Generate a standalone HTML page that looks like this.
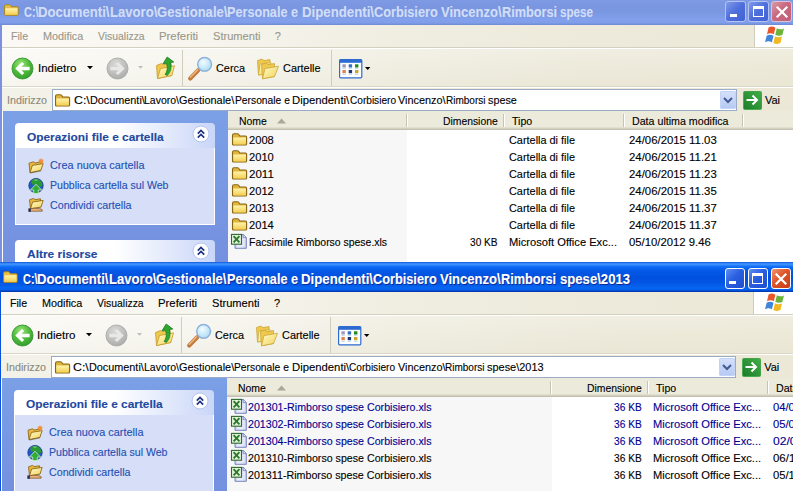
<!DOCTYPE html>
<html><head><meta charset="utf-8"><title>Explorer</title>
<style>
*{box-sizing:border-box;margin:0;padding:0}
html,body{width:793px;height:491px;overflow:hidden;background:#fff}
body{font-family:"Liberation Sans", sans-serif;font-size:11px;color:#000;position:relative}
.t{position:absolute;white-space:pre;transform-origin:0 0;-webkit-text-stroke:0.12px currentColor}
svg{position:absolute;overflow:visible}
</style></head><body>
<svg width="0" height="0" style="left:0;top:0"><defs>
<radialGradient id="gG" cx="0.42" cy="0.3" r="0.8"><stop offset="0" stop-color="#9be67a"/><stop offset="0.5" stop-color="#50bb3a"/><stop offset="1" stop-color="#2c962c"/></radialGradient>
<radialGradient id="gGray" cx="0.42" cy="0.3" r="0.8"><stop offset="0" stop-color="#dadad8"/><stop offset="0.6" stop-color="#bcbcba"/><stop offset="1" stop-color="#a6a6a4"/></radialGradient>
<linearGradient id="gF" x1="0" y1="0" x2="0" y2="1"><stop offset="0" stop-color="#fff3a8"/><stop offset="1" stop-color="#f3cf55"/></linearGradient>
<linearGradient id="gF2" x1="0" y1="0" x2="1" y2="1"><stop offset="0" stop-color="#fffac8"/><stop offset="1" stop-color="#f2d25c"/></linearGradient>
<radialGradient id="gL" cx="0.4" cy="0.35" r="0.7"><stop offset="0" stop-color="#f2fbff"/><stop offset="1" stop-color="#a9dcf3"/></radialGradient>
<linearGradient id="gGo" x1="0" y1="0" x2="0" y2="1"><stop offset="0" stop-color="#4fbf4f"/><stop offset="1" stop-color="#1f8a2a"/></linearGradient>
<linearGradient id="gDD" x1="0" y1="0" x2="0" y2="1"><stop offset="0" stop-color="#d6e2fb"/><stop offset="1" stop-color="#b4c8f2"/></linearGradient>
</defs></svg>
<div style="position:absolute;left:0px;top:-6px;width:793px;height:268px;background:#7b90e0"></div>
<div style="position:absolute;left:0px;top:-6px;width:793px;height:30.5px;background:linear-gradient(#7b96e0 0%,#8aa4ea 6%,#7f9be4 16%,#7a96e0 40%,#7a97e2 60%,#82a0ec 84%,#7f9de8 93%,#6f88d4 100%)"></div>
<svg style="left:4px;top:4.399999999999999px" width="15" height="12" viewBox="0 0 15 12"><path d="M0.5 2.3 Q0.5 0.7 2 0.7 L5.2 0.7 Q6.2 0.7 6.8 1.8 L7.3 2.7 L13 2.7 Q14.2 2.7 14.2 3.9 L14.2 10.4 Q14.2 11.4 13.2 11.4 L1.6 11.4 Q0.5 11.4 0.5 10.4 Z" fill="#e7bd45" stroke="#a8831f" stroke-width="0.9"/><path d="M1.3 4.3 L13.5 4.3 L13.5 10.2 Q13.5 10.8 12.9 10.8 L1.9 10.8 Q1.3 10.8 1.3 10.2 Z" fill="url(#gF)"/></svg>
<div style="position:absolute;left:725.3px;top:1.2px;width:20.6px;height:20.6px;background:linear-gradient(135deg,#8099ea 0%,#4d6edb 50%,#4263d5 100%);border:1px solid #b5c3f0;border-radius:3px"></div>
<div style="position:absolute;left:748.3px;top:1.2px;width:20.6px;height:20.6px;background:linear-gradient(135deg,#8099ea 0%,#4d6edb 50%,#4263d5 100%);border:1px solid #b5c3f0;border-radius:3px"></div>
<div style="position:absolute;left:771.3px;top:1.2px;width:20.6px;height:20.6px;background:linear-gradient(135deg,#d99aa8 0%,#c9687f 45%,#c06078 100%);border:1px solid #dcc3d3;border-radius:3px"></div>
<div style="position:absolute;left:730px;top:13.5px;width:7px;height:3px;background:#fff"></div>
<div style="position:absolute;left:753px;top:6.0px;width:11px;height:10.5px;border:1.5px solid #fff;border-top-width:3px"></div>
<svg style="left:772px;top:1.5px" width="20" height="20" viewBox="0 0 20 20"><path d="M5.5 5.5 L14.5 14.5 M14.5 5.5 L5.5 14.5" stroke="#fff" stroke-width="2.2" stroke-linecap="square"/></svg>
<div style="position:absolute;left:2px;top:24.5px;width:792px;height:238px;background:#efecdd"></div>
<div style="position:absolute;left:2px;top:24.5px;width:792px;height:22.5px;background:linear-gradient(90deg,#faf9f5 0%,#f6f5ee 25%,#f0eee1 50%,#edeadb 75%,#ece9d8 100%)"></div>
<div style="position:absolute;left:754px;top:24.5px;width:40px;height:22.5px;background:#fff;border-left:1px solid #cfccbc"></div>
<svg style="left:765.3px;top:26.4px" width="19" height="17.8" viewBox="0 0.9 17 15.7" preserveAspectRatio="none"><path d="M3.2 2.2 Q6 0.6 9.3 2.4 L7.9 8.2 Q5 6.6 1.8 8.2 Z" fill="#e9572a"/><path d="M10.6 2.9 Q13.6 4.6 17 3 L15.5 8.9 Q12.2 10.4 9.2 8.7 Z" fill="#6cb33a"/><path d="M1.5 9.4 Q4.6 7.8 7.6 9.5 L6.2 15.2 Q3.2 13.6 0 15.2 Z" fill="#3f86d9"/><path d="M8.9 10 Q12 11.7 15.2 10.2 L13.8 16 Q10.6 17.5 7.5 15.8 Z" fill="#f0b822"/></svg>
<div style="position:absolute;left:2px;top:47px;width:792px;height:1px;background:#d4d0c0"></div>
<div style="position:absolute;left:2px;top:48px;width:792px;height:39px;background:linear-gradient(90deg,#faf9f5 0%,#f6f5ee 25%,#f0eee1 50%,#edeadb 75%,#ece9d8 100%)"></div>
<div style="position:absolute;left:2px;top:48px;width:792px;height:39px;background:linear-gradient(rgba(255,255,255,0.2),rgba(255,255,255,0) 50%,rgba(200,195,170,0.08))"></div>
<div style="position:absolute;left:2px;top:48px;width:792px;height:1px;background:#fff"></div>
<div style="position:absolute;left:2px;top:86px;width:792px;height:1px;background:#dad7c6"></div>
<div style="position:absolute;left:2px;top:87px;width:792px;height:1px;background:#fff"></div>
<svg style="left:11.3px;top:56.5px" width="23" height="23" viewBox="0 0 23 23"><circle cx="11.5" cy="11.5" r="10.5" fill="url(#gG)" stroke="#2f952f" stroke-width="0.9"/><path d="M4.3 11.5 L11 4.9 L13.2 7 L10.4 9.8 L18.6 9.8 L18.6 13.2 L10.4 13.2 L13.2 16 L11 18.1 Z" fill="#fff"/></svg>
<svg style="left:87px;top:66px" width="6" height="3.5" viewBox="0 0 6 3.5"><path d="M0 0 L6 0 L3 3.3 Z" fill="#000"/></svg>
<svg style="left:105.7px;top:56.5px" width="23" height="23" viewBox="0 0 23 23"><circle cx="11.5" cy="11.5" r="10.5" fill="url(#gGray)" stroke="#a8a8a6" stroke-width="0.9"/><path d="M18.7 11.5 L12 4.9 L9.8 7 L12.6 9.8 L4.4 9.8 L4.4 13.2 L12.6 13.2 L9.8 16 L12 18.1 Z" fill="#e8e8e4"/></svg>
<svg style="left:137.8px;top:66px" width="5" height="3" viewBox="0 0 5 3"><path d="M0 0 L5 0 L2.5 2.8 Z" fill="#c0beb2"/></svg>
<svg style="left:155px;top:56px" width="21" height="24" viewBox="0 0 21 24"><path d="M1.5 9.5 L6.5 7.5 L8.5 8.8 L16 6.8 L16.8 19.5 L2.5 22.5 Z" fill="#f0c84e" stroke="#c49a2a" stroke-width="0.8"/><path d="M2.5 22.5 L5.5 12.5 L19.5 9.8 L16.8 19.5 Z" fill="url(#gF2)" stroke="#c49a2a" stroke-width="0.8"/><path d="M10.2 18.5 Q13.5 14 11.6 7.2 L8 7.8 L12.2 1 L18.8 6 L15.4 6.6 Q17.6 14 12.4 19.4 Z" fill="#2ea72e" stroke="#1a7a1e" stroke-width="0.8"/></svg>
<div style="position:absolute;left:182px;top:50px;width:1px;height:36px;background:#d0cdbd"></div>
<svg style="left:187px;top:56px" width="27" height="25" viewBox="0 0 27 25"><path d="M11.2 14.3 L3.2 22.4" stroke="#c27a3c" stroke-width="4.2" stroke-linecap="round"/><path d="M10.6 13.9 L3.4 21.2" stroke="#eeb27a" stroke-width="1.6" stroke-linecap="round"/><circle cx="17.6" cy="8.3" r="6.9" fill="url(#gL)" stroke="#8fb2dc" stroke-width="1.5"/></svg>
<svg style="left:256px;top:58px" width="24" height="22" viewBox="0 0 24 22"><path d="M1.5 2.5 L6 1 L8 2.6 L14 1.6 L14.5 15 L2.5 17 Z" fill="#f0c84e" stroke="#c9a63a" stroke-width="0.8"/><path d="M2.5 17 L4 6 L15 4.6 L14.5 15 Z" fill="url(#gF2)" stroke="#c9a63a" stroke-width="0.7"/><path d="M5.5 6.5 L10 5 L12 6.6 L18.5 5.6 L18.5 18.5 L6.5 20.8 Z" fill="#f0c84e" stroke="#c9a63a" stroke-width="0.8"/><path d="M6.5 20.8 L9 10.5 L22.5 8.3 L18.5 18.5 Z" fill="url(#gF2)" stroke="#c9a63a" stroke-width="0.8"/></svg>
<div style="position:absolute;left:331px;top:50px;width:1px;height:36px;background:#d0cdbd"></div>
<svg style="left:339px;top:58.5px" width="24" height="20" viewBox="0 0 24 20"><rect x="0.6" y="0.6" width="22.2" height="18.2" rx="1" fill="#fff" stroke="#2d6bd0" stroke-width="1.2"/><rect x="0.6" y="0.6" width="22.2" height="3.2" fill="#2d6bd0"/><rect x="3.4" y="5.3" width="3.4" height="3.2" fill="#a594bb"/><rect x="9.7" y="5.3" width="3.4" height="3.2" fill="#2f6fc6"/><rect x="16" y="5.3" width="3.4" height="3.2" fill="#218a21"/><rect x="3.4" y="11" width="3.4" height="3.2" fill="#e0824e"/><rect x="9.7" y="11" width="3.4" height="3.2" fill="#1f3870"/><rect x="16" y="11" width="3.4" height="3.2" fill="#c9a62e"/><path d="M3.4 9.6h3.4M9.7 9.6h3.4M16 9.6h3.4M3.4 15.4h3.4M9.7 15.4h3.4M16 15.4h3.4" stroke="#b9d2f2" stroke-width="0.9"/></svg>
<svg style="left:364.8px;top:67px" width="6" height="3.5" viewBox="0 0 6 3.5"><path d="M0 0 L5.4 0 L2.7 3 Z" fill="#000"/></svg>
<div style="position:absolute;left:2px;top:88px;width:792px;height:23px;background:linear-gradient(90deg,#f3f2e9 0%,#f1efe4 25%,#eeebdd 50%,#ece9d9 75%,#ebe8d7 100%)"></div>
<div style="position:absolute;left:52px;top:89px;width:685px;height:22px;background:#fff;border:1px solid #9aabc6"></div>
<svg style="left:55.3px;top:93.5px" width="16" height="13" viewBox="0 0 16 13"><path d="M0.5 2.5 Q0.5 0.8 2 0.8 L5.5 0.8 Q6.6 0.8 7.2 2 L7.8 3 L13.5 3 Q14.6 3 14.6 4.2 L14.6 11 Q14.6 12 13.5 12 L1.6 12 Q0.5 12 0.5 11 Z" fill="#e2b43c" stroke="#866716" stroke-width="1.1"/><path d="M1.3 4.6 L13.9 4.6 L13.9 10.8 Q13.9 11.4 13.2 11.4 L2 11.4 Q1.3 11.4 1.3 10.8 Z" fill="url(#gF)"/></svg>
<div style="position:absolute;left:720px;top:91px;width:16px;height:18px;background:linear-gradient(#d4e0fb,#b6caf3);border:1px solid #c3d3f7;border-radius:1px"></div>
<svg style="left:723px;top:96.5px" width="10" height="8" viewBox="0 0 10 8"><path d="M1 1 L5 5 L9 1" fill="none" stroke="#44598f" stroke-width="2"/></svg>
<div style="position:absolute;left:742.5px;top:90.5px;width:19px;height:19px;background:linear-gradient(45deg,#1c7c2a,#3fae46);border:1px solid rgba(90,175,95,0.6);border-radius:2px"></div>
<svg style="left:743px;top:91px" width="18" height="18" viewBox="0 0 18 18"><path d="M3.5 9 L13.5 9 M9.5 4.5 L14 9 L9.5 13.5" fill="none" stroke="#fff" stroke-width="2"/></svg>
<div style="position:absolute;left:2px;top:111px;width:1px;height:151px;background:#fff"></div>
<div style="position:absolute;left:3px;top:111px;width:225px;height:151px;background:linear-gradient(#7ba0e6,#7490e0 100%)"></div>
<div style="position:absolute;left:15px;top:123px;width:200px;height:25px;background:linear-gradient(90deg,#fff 0%,#fff 50%,#c9d6f8 100%);border-radius:4px 4px 0 0"></div>
<svg style="left:192px;top:124.80000000000001px" width="18" height="18" viewBox="0 0 18 18"><circle cx="9" cy="9" r="8" fill="#fff" stroke="#b4c4ee" stroke-width="1"/><path d="M5.8 8.6 L9 5.4 L12.2 8.6 M5.8 12.6 L9 9.4 L12.2 12.6" fill="none" stroke="#1c3280" stroke-width="1.7"/></svg>
<div style="position:absolute;left:15px;top:148px;width:200px;height:77px;background:#d6dff7;border:1px solid #fff;border-top:none"></div>
<svg style="left:28px;top:158px" width="16" height="16" viewBox="0 0 16 16"><path d="M1 5.2 L5.5 3.8 L7 5 L12.5 4 L12.8 12.2 L2 14.6 Z" fill="#e8b840" stroke="#8f6a1c" stroke-width="0.9"/><path d="M2 14.6 L4.4 7.4 L15.2 5.6 L12.8 12.4 Z" fill="url(#gF2)" stroke="#8f6a1c" stroke-width="0.9"/><path d="M2.2 15.2 L13 12.9" stroke="#6b5a3a" stroke-width="0.9" opacity="0.6"/><circle cx="13" cy="3.2" r="2" fill="#f07a22"/><path d="M13 0.4v5.6M10.2 3.2h5.6M11 1.2l4 4M15 1.2l-4 4" stroke="#f59a3a" stroke-width="0.7"/></svg>
<svg style="left:28px;top:178px" width="16" height="16" viewBox="0 0 16 16"><circle cx="8" cy="7.6" r="7.2" fill="#2458c4" stroke="#1a3a86" stroke-width="0.8"/><path d="M4.5 1.6 Q8 0.2 11.5 1.8 Q14.4 4 14.6 7 Q13 9.5 11 8.5 Q9.5 6 7 6.5 Q4.5 7.5 3.5 5.5 Q3 3 4.5 1.6Z" fill="#2a9a36"/><path d="M6 1.6 Q8 0.8 10 1.8 Q9 3.4 7 3 Z" fill="#7fd07a" opacity="0.8"/><path d="M8 6.2 L13.6 12 L10.3 12 L10.3 15.6 L5.7 15.6 L5.7 12 L2.4 12 Z" fill="#2fae35" stroke="#d5f0cf" stroke-width="0.8"/></svg>
<svg style="left:28px;top:197px" width="16" height="16" viewBox="0 0 16 16"><path d="M1.5 2.8 L5.5 1.4 L7 2.6 L12.5 1.8 L13 9.8 L2.5 11.8 Z" fill="#e8b840" stroke="#8f6a1c" stroke-width="0.9"/><path d="M2.5 11.8 L4.6 5 L15.2 3.4 L13 10 Z" fill="url(#gF2)" stroke="#8f6a1c" stroke-width="0.9"/><path d="M1.2 13.6 Q3 10.8 6 11.2 L10.5 11.6 Q13.6 11.8 14.2 12.8 L14.2 14.2 L1.2 14.2 Z" fill="#e8b27a" stroke="#7a4e22" stroke-width="0.7"/><rect x="0.4" y="11.4" width="2.4" height="3.4" fill="#222c55"/></svg>
<div style="position:absolute;left:15px;top:240px;width:200px;height:22px;background:linear-gradient(90deg,#fff 0%,#fff 50%,#c9d6f8 100%);border-radius:4px 4px 0 0"></div>
<svg style="left:192px;top:241.8px" width="18" height="18" viewBox="0 0 18 18"><circle cx="9" cy="9" r="8" fill="#fff" stroke="#b4c4ee" stroke-width="1"/><path d="M5.8 8.6 L9 5.4 L12.2 8.6 M5.8 12.6 L9 9.4 L12.2 12.6" fill="none" stroke="#1c3280" stroke-width="1.7"/></svg>
<div style="position:absolute;left:228px;top:111px;width:566px;height:151px;background:#fff"></div>
<div style="position:absolute;left:228px;top:111px;width:179px;height:151px;background:#f7f7f7"></div>
<div style="position:absolute;left:228px;top:111px;width:566px;height:19px;background:#ebeadb;border-bottom:1px solid #d6d2c2"></div>
<div style="position:absolute;left:228px;top:127px;width:566px;height:1px;background:#e2dfcf"></div>
<div style="position:absolute;left:228px;top:128px;width:566px;height:1px;background:#d4d0c0"></div>
<div style="position:absolute;left:228px;top:129px;width:566px;height:1px;background:#c4c0af"></div>
<div style="position:absolute;left:406px;top:114px;width:1px;height:13px;background:#c7c5b2"></div>
<div style="position:absolute;left:407px;top:114px;width:1px;height:13px;background:#fff"></div>
<div style="position:absolute;left:503px;top:114px;width:1px;height:13px;background:#c7c5b2"></div>
<div style="position:absolute;left:504px;top:114px;width:1px;height:13px;background:#fff"></div>
<div style="position:absolute;left:623px;top:114px;width:1px;height:13px;background:#c7c5b2"></div>
<div style="position:absolute;left:624px;top:114px;width:1px;height:13px;background:#fff"></div>
<div style="position:absolute;left:742px;top:114px;width:1px;height:13px;background:#c7c5b2"></div>
<div style="position:absolute;left:743px;top:114px;width:1px;height:13px;background:#fff"></div>
<svg style="left:276.5px;top:118.3px" width="9" height="6"><path d="M0 5.5 L4.5 0.5 L9 5.5 Z" fill="#aca899"/></svg>
<svg style="left:232.2px;top:132.9px" width="16" height="13" viewBox="0 0 16 13"><path d="M0.5 2.5 Q0.5 0.8 2 0.8 L5.5 0.8 Q6.6 0.8 7.2 2 L7.8 3 L13.5 3 Q14.6 3 14.6 4.2 L14.6 11 Q14.6 12 13.5 12 L1.6 12 Q0.5 12 0.5 11 Z" fill="#e2b43c" stroke="#866716" stroke-width="1.1"/><path d="M1.3 4.6 L13.9 4.6 L13.9 10.8 Q13.9 11.4 13.2 11.4 L2 11.4 Q1.3 11.4 1.3 10.8 Z" fill="url(#gF)"/></svg>
<svg style="left:232.2px;top:149.9px" width="16" height="13" viewBox="0 0 16 13"><path d="M0.5 2.5 Q0.5 0.8 2 0.8 L5.5 0.8 Q6.6 0.8 7.2 2 L7.8 3 L13.5 3 Q14.6 3 14.6 4.2 L14.6 11 Q14.6 12 13.5 12 L1.6 12 Q0.5 12 0.5 11 Z" fill="#e2b43c" stroke="#866716" stroke-width="1.1"/><path d="M1.3 4.6 L13.9 4.6 L13.9 10.8 Q13.9 11.4 13.2 11.4 L2 11.4 Q1.3 11.4 1.3 10.8 Z" fill="url(#gF)"/></svg>
<svg style="left:232.2px;top:166.9px" width="16" height="13" viewBox="0 0 16 13"><path d="M0.5 2.5 Q0.5 0.8 2 0.8 L5.5 0.8 Q6.6 0.8 7.2 2 L7.8 3 L13.5 3 Q14.6 3 14.6 4.2 L14.6 11 Q14.6 12 13.5 12 L1.6 12 Q0.5 12 0.5 11 Z" fill="#e2b43c" stroke="#866716" stroke-width="1.1"/><path d="M1.3 4.6 L13.9 4.6 L13.9 10.8 Q13.9 11.4 13.2 11.4 L2 11.4 Q1.3 11.4 1.3 10.8 Z" fill="url(#gF)"/></svg>
<svg style="left:232.2px;top:183.9px" width="16" height="13" viewBox="0 0 16 13"><path d="M0.5 2.5 Q0.5 0.8 2 0.8 L5.5 0.8 Q6.6 0.8 7.2 2 L7.8 3 L13.5 3 Q14.6 3 14.6 4.2 L14.6 11 Q14.6 12 13.5 12 L1.6 12 Q0.5 12 0.5 11 Z" fill="#e2b43c" stroke="#866716" stroke-width="1.1"/><path d="M1.3 4.6 L13.9 4.6 L13.9 10.8 Q13.9 11.4 13.2 11.4 L2 11.4 Q1.3 11.4 1.3 10.8 Z" fill="url(#gF)"/></svg>
<svg style="left:232.2px;top:200.9px" width="16" height="13" viewBox="0 0 16 13"><path d="M0.5 2.5 Q0.5 0.8 2 0.8 L5.5 0.8 Q6.6 0.8 7.2 2 L7.8 3 L13.5 3 Q14.6 3 14.6 4.2 L14.6 11 Q14.6 12 13.5 12 L1.6 12 Q0.5 12 0.5 11 Z" fill="#e2b43c" stroke="#866716" stroke-width="1.1"/><path d="M1.3 4.6 L13.9 4.6 L13.9 10.8 Q13.9 11.4 13.2 11.4 L2 11.4 Q1.3 11.4 1.3 10.8 Z" fill="url(#gF)"/></svg>
<svg style="left:232.2px;top:217.9px" width="16" height="13" viewBox="0 0 16 13"><path d="M0.5 2.5 Q0.5 0.8 2 0.8 L5.5 0.8 Q6.6 0.8 7.2 2 L7.8 3 L13.5 3 Q14.6 3 14.6 4.2 L14.6 11 Q14.6 12 13.5 12 L1.6 12 Q0.5 12 0.5 11 Z" fill="#e2b43c" stroke="#866716" stroke-width="1.1"/><path d="M1.3 4.6 L13.9 4.6 L13.9 10.8 Q13.9 11.4 13.2 11.4 L2 11.4 Q1.3 11.4 1.3 10.8 Z" fill="url(#gF)"/></svg>
<svg style="left:231px;top:233px" width="16" height="16" viewBox="0 0 16 16"><path d="M4 1.5 L12.2 1.5 L15.3 4.6 L15.3 15.3 L4 15.3 Z" fill="#d3dbf6" stroke="#6a78b4" stroke-width="0.9"/><path d="M12.2 1.5 L12.2 4.6 L15.3 4.6 Z" fill="#f4f6ff" stroke="#6a78b4" stroke-width="0.7"/><path d="M11 6.2H14M11 8.2H14M11 10.2H14M6 12.2H14M6 13.8H12" stroke="#f2f5ff" stroke-width="0.9"/><rect x="0.5" y="1.4" width="10" height="9.8" fill="#e4f2dc" stroke="#2f6a2a" stroke-width="1.1"/><path d="M2.6 3.2 L8.4 9.4 M8.4 3.2 L2.6 9.4" stroke="#2c7a2c" stroke-width="1.9"/></svg>
<div style="position:absolute;left:-0.8px;top:262px;width:794px;height:230px;background:#0a52dc"></div>
<div style="position:absolute;left:-0.8px;top:262px;width:794px;height:30px;background:linear-gradient(#0a46c8 0%,#2f7ff7 3%,#3d93ff 8%,#0f6bf5 16%,#0458e6 30%,#0050dd 52%,#0356e4 70%,#0766f0 86%,#0560ec 93%,#0241c4 97%,#002fa0 100%)"></div>
<svg style="left:3.2px;top:271.4px" width="15" height="12" viewBox="0 0 15 12"><path d="M0.5 2.3 Q0.5 0.7 2 0.7 L5.2 0.7 Q6.2 0.7 6.8 1.8 L7.3 2.7 L13 2.7 Q14.2 2.7 14.2 3.9 L14.2 10.4 Q14.2 11.4 13.2 11.4 L1.6 11.4 Q0.5 11.4 0.5 10.4 Z" fill="#e7bd45" stroke="#a8831f" stroke-width="0.9"/><path d="M1.3 4.3 L13.5 4.3 L13.5 10.2 Q13.5 10.8 12.9 10.8 L1.9 10.8 Q1.3 10.8 1.3 10.2 Z" fill="url(#gF)"/></svg>
<div style="position:absolute;left:724.5px;top:268.2px;width:20.6px;height:20.6px;background:linear-gradient(135deg,#5f8ff6 0%,#2a5fe0 45%,#1f4fd0 100%);border:1px solid #fff;border-radius:3px"></div>
<div style="position:absolute;left:747.5px;top:268.2px;width:20.6px;height:20.6px;background:linear-gradient(135deg,#5f8ff6 0%,#2a5fe0 45%,#1f4fd0 100%);border:1px solid #fff;border-radius:3px"></div>
<div style="position:absolute;left:770.5px;top:268.2px;width:20.6px;height:20.6px;background:linear-gradient(135deg,#f09672 0%,#df5428 45%,#c63c16 100%);border:1px solid #fff;border-radius:3px"></div>
<div style="position:absolute;left:729.2px;top:280.5px;width:7px;height:3px;background:#fff"></div>
<div style="position:absolute;left:752.2px;top:273.0px;width:11px;height:10.5px;border:1.5px solid #fff;border-top-width:3px"></div>
<svg style="left:771.2px;top:268.5px" width="20" height="20" viewBox="0 0 20 20"><path d="M5.5 5.5 L14.5 14.5 M14.5 5.5 L5.5 14.5" stroke="#fff" stroke-width="2.2" stroke-linecap="square"/></svg>
<div style="position:absolute;left:1.2px;top:292px;width:792px;height:200px;background:#efecdd"></div>
<div style="position:absolute;left:1.2px;top:292px;width:792px;height:22px;background:linear-gradient(90deg,#faf9f5 0%,#f6f5ee 25%,#f0eee1 50%,#edeadb 75%,#ece9d8 100%)"></div>
<div style="position:absolute;left:753.2px;top:292px;width:40px;height:22px;background:#fff;border-left:1px solid #cfccbc"></div>
<svg style="left:764.5px;top:293.4px" width="19" height="17.8" viewBox="0 0.9 17 15.7" preserveAspectRatio="none"><path d="M3.2 2.2 Q6 0.6 9.3 2.4 L7.9 8.2 Q5 6.6 1.8 8.2 Z" fill="#e9572a"/><path d="M10.6 2.9 Q13.6 4.6 17 3 L15.5 8.9 Q12.2 10.4 9.2 8.7 Z" fill="#6cb33a"/><path d="M1.5 9.4 Q4.6 7.8 7.6 9.5 L6.2 15.2 Q3.2 13.6 0 15.2 Z" fill="#3f86d9"/><path d="M8.9 10 Q12 11.7 15.2 10.2 L13.8 16 Q10.6 17.5 7.5 15.8 Z" fill="#f0b822"/></svg>
<div style="position:absolute;left:1.2px;top:314px;width:792px;height:1px;background:#d4d0c0"></div>
<div style="position:absolute;left:1.2px;top:315px;width:792px;height:39px;background:linear-gradient(90deg,#faf9f5 0%,#f6f5ee 25%,#f0eee1 50%,#edeadb 75%,#ece9d8 100%)"></div>
<div style="position:absolute;left:1.2px;top:315px;width:792px;height:39px;background:linear-gradient(rgba(255,255,255,0.2),rgba(255,255,255,0) 50%,rgba(200,195,170,0.08))"></div>
<div style="position:absolute;left:1.2px;top:315px;width:792px;height:1px;background:#fff"></div>
<div style="position:absolute;left:1.2px;top:353px;width:792px;height:1px;background:#dad7c6"></div>
<div style="position:absolute;left:1.2px;top:354px;width:792px;height:1px;background:#fff"></div>
<svg style="left:10.5px;top:323.5px" width="23" height="23" viewBox="0 0 23 23"><circle cx="11.5" cy="11.5" r="10.5" fill="url(#gG)" stroke="#2f952f" stroke-width="0.9"/><path d="M4.3 11.5 L11 4.9 L13.2 7 L10.4 9.8 L18.6 9.8 L18.6 13.2 L10.4 13.2 L13.2 16 L11 18.1 Z" fill="#fff"/></svg>
<svg style="left:86.2px;top:333px" width="6" height="3.5" viewBox="0 0 6 3.5"><path d="M0 0 L6 0 L3 3.3 Z" fill="#000"/></svg>
<svg style="left:104.9px;top:323.5px" width="23" height="23" viewBox="0 0 23 23"><circle cx="11.5" cy="11.5" r="10.5" fill="url(#gGray)" stroke="#a8a8a6" stroke-width="0.9"/><path d="M18.7 11.5 L12 4.9 L9.8 7 L12.6 9.8 L4.4 9.8 L4.4 13.2 L12.6 13.2 L9.8 16 L12 18.1 Z" fill="#e8e8e4"/></svg>
<svg style="left:137.0px;top:333px" width="5" height="3" viewBox="0 0 5 3"><path d="M0 0 L5 0 L2.5 2.8 Z" fill="#c0beb2"/></svg>
<svg style="left:154.2px;top:323px" width="21" height="24" viewBox="0 0 21 24"><path d="M1.5 9.5 L6.5 7.5 L8.5 8.8 L16 6.8 L16.8 19.5 L2.5 22.5 Z" fill="#f0c84e" stroke="#c49a2a" stroke-width="0.8"/><path d="M2.5 22.5 L5.5 12.5 L19.5 9.8 L16.8 19.5 Z" fill="url(#gF2)" stroke="#c49a2a" stroke-width="0.8"/><path d="M10.2 18.5 Q13.5 14 11.6 7.2 L8 7.8 L12.2 1 L18.8 6 L15.4 6.6 Q17.6 14 12.4 19.4 Z" fill="#2ea72e" stroke="#1a7a1e" stroke-width="0.8"/></svg>
<div style="position:absolute;left:181.2px;top:317px;width:1px;height:36px;background:#d0cdbd"></div>
<svg style="left:186.2px;top:323px" width="27" height="25" viewBox="0 0 27 25"><path d="M11.2 14.3 L3.2 22.4" stroke="#c27a3c" stroke-width="4.2" stroke-linecap="round"/><path d="M10.6 13.9 L3.4 21.2" stroke="#eeb27a" stroke-width="1.6" stroke-linecap="round"/><circle cx="17.6" cy="8.3" r="6.9" fill="url(#gL)" stroke="#8fb2dc" stroke-width="1.5"/></svg>
<svg style="left:255.2px;top:325px" width="24" height="22" viewBox="0 0 24 22"><path d="M1.5 2.5 L6 1 L8 2.6 L14 1.6 L14.5 15 L2.5 17 Z" fill="#f0c84e" stroke="#c9a63a" stroke-width="0.8"/><path d="M2.5 17 L4 6 L15 4.6 L14.5 15 Z" fill="url(#gF2)" stroke="#c9a63a" stroke-width="0.7"/><path d="M5.5 6.5 L10 5 L12 6.6 L18.5 5.6 L18.5 18.5 L6.5 20.8 Z" fill="#f0c84e" stroke="#c9a63a" stroke-width="0.8"/><path d="M6.5 20.8 L9 10.5 L22.5 8.3 L18.5 18.5 Z" fill="url(#gF2)" stroke="#c9a63a" stroke-width="0.8"/></svg>
<div style="position:absolute;left:330.2px;top:317px;width:1px;height:36px;background:#d0cdbd"></div>
<svg style="left:338.2px;top:325.5px" width="24" height="20" viewBox="0 0 24 20"><rect x="0.6" y="0.6" width="22.2" height="18.2" rx="1" fill="#fff" stroke="#2d6bd0" stroke-width="1.2"/><rect x="0.6" y="0.6" width="22.2" height="3.2" fill="#2d6bd0"/><rect x="3.4" y="5.3" width="3.4" height="3.2" fill="#a594bb"/><rect x="9.7" y="5.3" width="3.4" height="3.2" fill="#2f6fc6"/><rect x="16" y="5.3" width="3.4" height="3.2" fill="#218a21"/><rect x="3.4" y="11" width="3.4" height="3.2" fill="#e0824e"/><rect x="9.7" y="11" width="3.4" height="3.2" fill="#1f3870"/><rect x="16" y="11" width="3.4" height="3.2" fill="#c9a62e"/><path d="M3.4 9.6h3.4M9.7 9.6h3.4M16 9.6h3.4M3.4 15.4h3.4M9.7 15.4h3.4M16 15.4h3.4" stroke="#b9d2f2" stroke-width="0.9"/></svg>
<svg style="left:364.0px;top:334px" width="6" height="3.5" viewBox="0 0 6 3.5"><path d="M0 0 L5.4 0 L2.7 3 Z" fill="#000"/></svg>
<div style="position:absolute;left:1.2px;top:355px;width:792px;height:23px;background:linear-gradient(90deg,#f3f2e9 0%,#f1efe4 25%,#eeebdd 50%,#ece9d9 75%,#ebe8d7 100%)"></div>
<div style="position:absolute;left:51.2px;top:356px;width:685px;height:22px;background:#fff;border:1px solid #9aabc6"></div>
<svg style="left:54.5px;top:360.5px" width="16" height="13" viewBox="0 0 16 13"><path d="M0.5 2.5 Q0.5 0.8 2 0.8 L5.5 0.8 Q6.6 0.8 7.2 2 L7.8 3 L13.5 3 Q14.6 3 14.6 4.2 L14.6 11 Q14.6 12 13.5 12 L1.6 12 Q0.5 12 0.5 11 Z" fill="#e2b43c" stroke="#866716" stroke-width="1.1"/><path d="M1.3 4.6 L13.9 4.6 L13.9 10.8 Q13.9 11.4 13.2 11.4 L2 11.4 Q1.3 11.4 1.3 10.8 Z" fill="url(#gF)"/></svg>
<div style="position:absolute;left:719.2px;top:358px;width:16px;height:18px;background:linear-gradient(#d4e0fb,#b6caf3);border:1px solid #c3d3f7;border-radius:1px"></div>
<svg style="left:722.2px;top:363.5px" width="10" height="8" viewBox="0 0 10 8"><path d="M1 1 L5 5 L9 1" fill="none" stroke="#44598f" stroke-width="2"/></svg>
<div style="position:absolute;left:741.7px;top:357.5px;width:19px;height:19px;background:linear-gradient(45deg,#1c7c2a,#3fae46);border:1px solid rgba(90,175,95,0.6);border-radius:2px"></div>
<svg style="left:742.2px;top:358px" width="18" height="18" viewBox="0 0 18 18"><path d="M3.5 9 L13.5 9 M9.5 4.5 L14 9 L9.5 13.5" fill="none" stroke="#fff" stroke-width="2"/></svg>
<div style="position:absolute;left:1.2px;top:378px;width:1px;height:113px;background:#fff"></div>
<div style="position:absolute;left:2.2px;top:378px;width:225px;height:113px;background:linear-gradient(#7ba0e6,#7490e0 100%)"></div>
<div style="position:absolute;left:14.2px;top:390px;width:200px;height:25px;background:linear-gradient(90deg,#fff 0%,#fff 50%,#c9d6f8 100%);border-radius:4px 4px 0 0"></div>
<svg style="left:191.2px;top:391.8px" width="18" height="18" viewBox="0 0 18 18"><circle cx="9" cy="9" r="8" fill="#fff" stroke="#b4c4ee" stroke-width="1"/><path d="M5.8 8.6 L9 5.4 L12.2 8.6 M5.8 12.6 L9 9.4 L12.2 12.6" fill="none" stroke="#1c3280" stroke-width="1.7"/></svg>
<div style="position:absolute;left:14.2px;top:415px;width:200px;height:77px;background:#d6dff7;border:1px solid #fff;border-top:none"></div>
<svg style="left:27.2px;top:425px" width="16" height="16" viewBox="0 0 16 16"><path d="M1 5.2 L5.5 3.8 L7 5 L12.5 4 L12.8 12.2 L2 14.6 Z" fill="#e8b840" stroke="#8f6a1c" stroke-width="0.9"/><path d="M2 14.6 L4.4 7.4 L15.2 5.6 L12.8 12.4 Z" fill="url(#gF2)" stroke="#8f6a1c" stroke-width="0.9"/><path d="M2.2 15.2 L13 12.9" stroke="#6b5a3a" stroke-width="0.9" opacity="0.6"/><circle cx="13" cy="3.2" r="2" fill="#f07a22"/><path d="M13 0.4v5.6M10.2 3.2h5.6M11 1.2l4 4M15 1.2l-4 4" stroke="#f59a3a" stroke-width="0.7"/></svg>
<svg style="left:27.2px;top:445px" width="16" height="16" viewBox="0 0 16 16"><circle cx="8" cy="7.6" r="7.2" fill="#2458c4" stroke="#1a3a86" stroke-width="0.8"/><path d="M4.5 1.6 Q8 0.2 11.5 1.8 Q14.4 4 14.6 7 Q13 9.5 11 8.5 Q9.5 6 7 6.5 Q4.5 7.5 3.5 5.5 Q3 3 4.5 1.6Z" fill="#2a9a36"/><path d="M6 1.6 Q8 0.8 10 1.8 Q9 3.4 7 3 Z" fill="#7fd07a" opacity="0.8"/><path d="M8 6.2 L13.6 12 L10.3 12 L10.3 15.6 L5.7 15.6 L5.7 12 L2.4 12 Z" fill="#2fae35" stroke="#d5f0cf" stroke-width="0.8"/></svg>
<svg style="left:27.2px;top:464px" width="16" height="16" viewBox="0 0 16 16"><path d="M1.5 2.8 L5.5 1.4 L7 2.6 L12.5 1.8 L13 9.8 L2.5 11.8 Z" fill="#e8b840" stroke="#8f6a1c" stroke-width="0.9"/><path d="M2.5 11.8 L4.6 5 L15.2 3.4 L13 10 Z" fill="url(#gF2)" stroke="#8f6a1c" stroke-width="0.9"/><path d="M1.2 13.6 Q3 10.8 6 11.2 L10.5 11.6 Q13.6 11.8 14.2 12.8 L14.2 14.2 L1.2 14.2 Z" fill="#e8b27a" stroke="#7a4e22" stroke-width="0.7"/><rect x="0.4" y="11.4" width="2.4" height="3.4" fill="#222c55"/></svg>
<div style="position:absolute;left:227.2px;top:378px;width:566px;height:113px;background:#fff"></div>
<div style="position:absolute;left:227.2px;top:378px;width:324.79999999999995px;height:113px;background:#f7f7f7"></div>
<div style="position:absolute;left:227.2px;top:378px;width:566px;height:19px;background:#ebeadb;border-bottom:1px solid #d6d2c2"></div>
<div style="position:absolute;left:227.2px;top:394px;width:566px;height:1px;background:#e2dfcf"></div>
<div style="position:absolute;left:227.2px;top:395px;width:566px;height:1px;background:#d4d0c0"></div>
<div style="position:absolute;left:227.2px;top:396px;width:566px;height:1px;background:#c4c0af"></div>
<div style="position:absolute;left:550.2px;top:381px;width:1px;height:13px;background:#c7c5b2"></div>
<div style="position:absolute;left:551.2px;top:381px;width:1px;height:13px;background:#fff"></div>
<div style="position:absolute;left:646.8px;top:381px;width:1px;height:13px;background:#c7c5b2"></div>
<div style="position:absolute;left:647.8px;top:381px;width:1px;height:13px;background:#fff"></div>
<div style="position:absolute;left:767.0px;top:381px;width:1px;height:13px;background:#c7c5b2"></div>
<div style="position:absolute;left:768.0px;top:381px;width:1px;height:13px;background:#fff"></div>
<svg style="left:276.5px;top:385.3px" width="9" height="6"><path d="M0 5.5 L4.5 0.5 L9 5.5 Z" fill="#aca899"/></svg>
<svg style="left:231px;top:398px" width="16" height="16" viewBox="0 0 16 16"><path d="M4 1.5 L12.2 1.5 L15.3 4.6 L15.3 15.3 L4 15.3 Z" fill="#d3dbf6" stroke="#6a78b4" stroke-width="0.9"/><path d="M12.2 1.5 L12.2 4.6 L15.3 4.6 Z" fill="#f4f6ff" stroke="#6a78b4" stroke-width="0.7"/><path d="M11 6.2H14M11 8.2H14M11 10.2H14M6 12.2H14M6 13.8H12" stroke="#f2f5ff" stroke-width="0.9"/><rect x="0.5" y="1.4" width="10" height="9.8" fill="#e4f2dc" stroke="#2f6a2a" stroke-width="1.1"/><path d="M2.6 3.2 L8.4 9.4 M8.4 3.2 L2.6 9.4" stroke="#2c7a2c" stroke-width="1.9"/></svg>
<svg style="left:231px;top:415px" width="16" height="16" viewBox="0 0 16 16"><path d="M4 1.5 L12.2 1.5 L15.3 4.6 L15.3 15.3 L4 15.3 Z" fill="#d3dbf6" stroke="#6a78b4" stroke-width="0.9"/><path d="M12.2 1.5 L12.2 4.6 L15.3 4.6 Z" fill="#f4f6ff" stroke="#6a78b4" stroke-width="0.7"/><path d="M11 6.2H14M11 8.2H14M11 10.2H14M6 12.2H14M6 13.8H12" stroke="#f2f5ff" stroke-width="0.9"/><rect x="0.5" y="1.4" width="10" height="9.8" fill="#e4f2dc" stroke="#2f6a2a" stroke-width="1.1"/><path d="M2.6 3.2 L8.4 9.4 M8.4 3.2 L2.6 9.4" stroke="#2c7a2c" stroke-width="1.9"/></svg>
<svg style="left:231px;top:432px" width="16" height="16" viewBox="0 0 16 16"><path d="M4 1.5 L12.2 1.5 L15.3 4.6 L15.3 15.3 L4 15.3 Z" fill="#d3dbf6" stroke="#6a78b4" stroke-width="0.9"/><path d="M12.2 1.5 L12.2 4.6 L15.3 4.6 Z" fill="#f4f6ff" stroke="#6a78b4" stroke-width="0.7"/><path d="M11 6.2H14M11 8.2H14M11 10.2H14M6 12.2H14M6 13.8H12" stroke="#f2f5ff" stroke-width="0.9"/><rect x="0.5" y="1.4" width="10" height="9.8" fill="#e4f2dc" stroke="#2f6a2a" stroke-width="1.1"/><path d="M2.6 3.2 L8.4 9.4 M8.4 3.2 L2.6 9.4" stroke="#2c7a2c" stroke-width="1.9"/></svg>
<svg style="left:231px;top:449px" width="16" height="16" viewBox="0 0 16 16"><path d="M4 1.5 L12.2 1.5 L15.3 4.6 L15.3 15.3 L4 15.3 Z" fill="#d3dbf6" stroke="#6a78b4" stroke-width="0.9"/><path d="M12.2 1.5 L12.2 4.6 L15.3 4.6 Z" fill="#f4f6ff" stroke="#6a78b4" stroke-width="0.7"/><path d="M11 6.2H14M11 8.2H14M11 10.2H14M6 12.2H14M6 13.8H12" stroke="#f2f5ff" stroke-width="0.9"/><rect x="0.5" y="1.4" width="10" height="9.8" fill="#e4f2dc" stroke="#2f6a2a" stroke-width="1.1"/><path d="M2.6 3.2 L8.4 9.4 M8.4 3.2 L2.6 9.4" stroke="#2c7a2c" stroke-width="1.9"/></svg>
<svg style="left:231px;top:466px" width="16" height="16" viewBox="0 0 16 16"><path d="M4 1.5 L12.2 1.5 L15.3 4.6 L15.3 15.3 L4 15.3 Z" fill="#d3dbf6" stroke="#6a78b4" stroke-width="0.9"/><path d="M12.2 1.5 L12.2 4.6 L15.3 4.6 Z" fill="#f4f6ff" stroke="#6a78b4" stroke-width="0.7"/><path d="M11 6.2H14M11 8.2H14M11 10.2H14M6 12.2H14M6 13.8H12" stroke="#f2f5ff" stroke-width="0.9"/><rect x="0.5" y="1.4" width="10" height="9.8" fill="#e4f2dc" stroke="#2f6a2a" stroke-width="1.1"/><path d="M2.6 3.2 L8.4 9.4 M8.4 3.2 L2.6 9.4" stroke="#2c7a2c" stroke-width="1.9"/></svg>
<span class="t" style="top:3px;line-height:18px;font-size:14px;color:#d2def7;font-weight:bold;transform:scaleX(0.7819);left:23.61px;">C:\</span>
<span class="t" style="top:3px;line-height:18px;font-size:14px;color:#d2def7;font-weight:bold;transform:scaleX(0.9379);left:38.10px;">Documenti\</span>
<span class="t" style="top:3px;line-height:18px;font-size:14px;color:#d2def7;font-weight:bold;transform:scaleX(0.9352);left:109.60px;">Lavoro\</span>
<span class="t" style="top:3px;line-height:18px;font-size:14px;color:#d2def7;font-weight:bold;transform:scaleX(0.9328);left:156.90px;">Gestionale\</span>
<span class="t" style="top:3px;line-height:18px;font-size:14px;color:#d2def7;font-weight:bold;transform:scaleX(0.9030);left:227.32px;">Personale e </span>
<span class="t" style="top:3px;line-height:18px;font-size:14px;color:#d2def7;font-weight:bold;transform:scaleX(0.9445);left:301.79px;">Dipendenti\</span>
<span class="t" style="top:3px;line-height:18px;font-size:14px;color:#d2def7;font-weight:bold;transform:scaleX(0.9106);left:373.82px;">Corbisiero </span>
<span class="t" style="top:3px;line-height:18px;font-size:14px;color:#d2def7;font-weight:bold;transform:scaleX(0.9294);left:441.10px;">Vincenzo\</span>
<span class="t" style="top:3px;line-height:18px;font-size:14px;color:#d2def7;font-weight:bold;transform:scaleX(0.9090);left:501.62px;">Rimborsi </span>
<span class="t" style="top:3px;line-height:18px;font-size:14px;color:#d2def7;font-weight:bold;transform:scaleX(0.8333);left:560.38px;">spese</span>
<span class="t" style="top:29px;line-height:15px;font-size:11px;color:#9a978a;transform:scaleX(0.9675);left:10.57px;">File</span>
<span class="t" style="top:29px;line-height:15px;font-size:11px;color:#9a978a;transform:scaleX(0.9831);left:42.76px;">Modifica</span>
<span class="t" style="top:29px;line-height:15px;font-size:11px;color:#9a978a;transform:scaleX(0.9453);left:97.69px;">Visualizza</span>
<span class="t" style="top:29px;line-height:15px;font-size:11px;color:#9a978a;transform:scaleX(1.0326);left:158.93px;">Preferiti</span>
<span class="t" style="top:29px;line-height:15px;font-size:11px;color:#9a978a;transform:scaleX(1.0092);left:213.04px;">Strumenti</span>
<span class="t" style="top:29px;line-height:15px;font-size:11px;color:#9a978a;left:274.75px;">?</span>
<span class="t" style="top:61px;line-height:15px;font-size:11px;color:#000;transform:scaleX(1.0479);left:38.01px;">Indietro</span>
<span class="t" style="top:61px;line-height:15px;font-size:11px;color:#000;transform:scaleX(0.9877);left:215.86px;">Cerca</span>
<span class="t" style="top:61px;line-height:15px;font-size:11px;color:#000;transform:scaleX(0.9916);left:283.06px;">Cartelle</span>
<span class="t" style="top:93px;line-height:15px;font-size:11px;color:#8c897b;transform:scaleX(0.9756);left:7.27px;">Indirizzo</span>
<span class="t" style="top:93px;line-height:15px;font-size:11px;color:#000;transform:scaleX(1.1236);left:73.76px;">C:\</span>
<span class="t" style="top:93px;line-height:15px;font-size:11px;color:#000;transform:scaleX(0.9849);left:89.66px;">Documenti\</span>
<span class="t" style="top:93px;line-height:15px;font-size:11px;color:#000;transform:scaleX(0.9536);left:144.48px;">Lavoro\</span>
<span class="t" style="top:93px;line-height:15px;font-size:11px;color:#000;transform:scaleX(0.9918);left:179.46px;">Gestionale\</span>
<span class="t" style="top:93px;line-height:15px;font-size:11px;color:#000;transform:scaleX(0.9342);left:234.70px;">Personale e </span>
<span class="t" style="top:93px;line-height:15px;font-size:11px;color:#000;transform:scaleX(1.0277);left:292.33px;">Dipendenti\</span>
<span class="t" style="top:93px;line-height:15px;font-size:11px;color:#000;transform:scaleX(0.9175);left:349.61px;">Corbisiero </span>
<span class="t" style="top:93px;line-height:15px;font-size:11px;color:#000;transform:scaleX(0.9894);left:398.36px;">Vincenzo\</span>
<span class="t" style="top:93px;line-height:15px;font-size:11px;color:#000;transform:scaleX(0.9106);left:446.02px;">Rimborsi </span>
<span class="t" style="top:93px;line-height:15px;font-size:11px;color:#000;transform:scaleX(0.9801);left:488.26px;">spese</span>
<span class="t" style="top:93px;line-height:15px;font-size:11px;color:#000;left:764.95px;">Vai</span>
<span class="t" style="top:130px;line-height:15px;font-size:11px;color:#23489f;font-weight:bold;transform:scaleX(1.0801);left:26.89px;">Operazioni file e cartella</span>
<span class="t" style="top:158px;line-height:15px;font-size:11px;color:#2450b4;transform:scaleX(0.9905);left:50.06px;">Crea nuova cartella</span>
<span class="t" style="top:178px;line-height:15px;font-size:11px;color:#2450b4;transform:scaleX(0.9606);left:50.08px;">Pubblica cartella sul Web</span>
<span class="t" style="top:198px;line-height:15px;font-size:11px;color:#2450b4;transform:scaleX(0.9725);left:50.07px;">Condividi cartella</span>
<span class="t" style="top:247px;line-height:15px;font-size:11px;color:#23489f;font-weight:bold;transform:scaleX(1.0880);left:26.88px;">Altre risorse</span>
<span class="t" style="top:114px;line-height:15px;font-size:11px;color:#000;transform:scaleX(0.9450);left:238.79px;">Nome</span>
<span class="t" style="top:114px;line-height:15px;font-size:11px;color:#000;transform:scaleX(0.9420);left:442.99px;">Dimensione</span>
<span class="t" style="top:114px;line-height:15px;font-size:11px;color:#000;transform:scaleX(0.9645);left:512.28px;">Tipo</span>
<span class="t" style="top:114px;line-height:15px;font-size:11px;color:#000;transform:scaleX(0.9689);left:631.97px;">Data ultima modifica</span>
<span class="t" style="top:133px;line-height:15px;font-size:11px;color:#000;transform:scaleX(1.0136);left:248.94px;">2008</span>
<span class="t" style="top:133px;line-height:15px;font-size:11px;color:#000;transform:scaleX(0.9902);left:508.56px;">Cartella di file</span>
<span class="t" style="top:150px;line-height:15px;font-size:11px;color:#000;transform:scaleX(1.0136);left:248.94px;">2010</span>
<span class="t" style="top:150px;line-height:15px;font-size:11px;color:#000;transform:scaleX(0.9902);left:508.56px;">Cartella di file</span>
<span class="t" style="top:167px;line-height:15px;font-size:11px;color:#000;transform:scaleX(1.0512);left:248.91px;">2011</span>
<span class="t" style="top:167px;line-height:15px;font-size:11px;color:#000;transform:scaleX(0.9902);left:508.56px;">Cartella di file</span>
<span class="t" style="top:184px;line-height:15px;font-size:11px;color:#000;transform:scaleX(1.0136);left:248.94px;">2012</span>
<span class="t" style="top:184px;line-height:15px;font-size:11px;color:#000;transform:scaleX(0.9902);left:508.56px;">Cartella di file</span>
<span class="t" style="top:201px;line-height:15px;font-size:11px;color:#000;transform:scaleX(1.0136);left:248.94px;">2013</span>
<span class="t" style="top:201px;line-height:15px;font-size:11px;color:#000;transform:scaleX(0.9902);left:508.56px;">Cartella di file</span>
<span class="t" style="top:218px;line-height:15px;font-size:11px;color:#000;transform:scaleX(1.0136);left:248.94px;">2014</span>
<span class="t" style="top:218px;line-height:15px;font-size:11px;color:#000;transform:scaleX(0.9902);left:508.56px;">Cartella di file</span>
<span class="t" style="top:133px;line-height:15px;font-size:11px;color:#000;transform:scaleX(1.0344);left:628.82px;">24/06/2015 11.03</span>
<span class="t" style="top:150px;line-height:15px;font-size:11px;color:#000;transform:scaleX(1.0344);left:628.82px;">24/06/2015 11.21</span>
<span class="t" style="top:167px;line-height:15px;font-size:11px;color:#000;transform:scaleX(1.0344);left:628.82px;">24/06/2015 11.23</span>
<span class="t" style="top:184px;line-height:15px;font-size:11px;color:#000;transform:scaleX(1.0344);left:628.82px;">24/06/2015 11.35</span>
<span class="t" style="top:201px;line-height:15px;font-size:11px;color:#000;transform:scaleX(1.0344);left:628.82px;">24/06/2015 11.37</span>
<span class="t" style="top:218px;line-height:15px;font-size:11px;color:#000;transform:scaleX(1.0344);left:628.82px;">24/06/2015 11.37</span>
<span class="t" style="top:235px;line-height:15px;font-size:11px;color:#000;transform:scaleX(0.9488);left:248.89px;">Facsimile Rimborso spese.xls</span>
<span class="t" style="top:235px;line-height:15px;font-size:11px;color:#000;transform:scaleX(0.9209);left:470.11px;">30 KB</span>
<span class="t" style="top:235px;line-height:15px;font-size:11px;color:#000;transform:scaleX(1.0116);left:508.54px;">Microsoft Office Exc...</span>
<span class="t" style="top:235px;line-height:15px;font-size:11px;color:#000;transform:scaleX(1.0277);left:628.83px;">05/10/2012 9.46</span>
<span class="t" style="top:270px;line-height:18px;font-size:14px;color:#fff;font-weight:bold;text-shadow:1px 1px 0 #0a2a9a;transform:scaleX(0.7819);left:22.81px;">C:\</span>
<span class="t" style="top:270px;line-height:18px;font-size:14px;color:#fff;font-weight:bold;text-shadow:1px 1px 0 #0a2a9a;transform:scaleX(0.9379);left:37.30px;">Documenti\</span>
<span class="t" style="top:270px;line-height:18px;font-size:14px;color:#fff;font-weight:bold;text-shadow:1px 1px 0 #0a2a9a;transform:scaleX(0.9352);left:108.80px;">Lavoro\</span>
<span class="t" style="top:270px;line-height:18px;font-size:14px;color:#fff;font-weight:bold;text-shadow:1px 1px 0 #0a2a9a;transform:scaleX(0.9328);left:156.10px;">Gestionale\</span>
<span class="t" style="top:270px;line-height:18px;font-size:14px;color:#fff;font-weight:bold;text-shadow:1px 1px 0 #0a2a9a;transform:scaleX(0.9030);left:226.52px;">Personale e </span>
<span class="t" style="top:270px;line-height:18px;font-size:14px;color:#fff;font-weight:bold;text-shadow:1px 1px 0 #0a2a9a;transform:scaleX(0.9445);left:300.99px;">Dipendenti\</span>
<span class="t" style="top:270px;line-height:18px;font-size:14px;color:#fff;font-weight:bold;text-shadow:1px 1px 0 #0a2a9a;transform:scaleX(0.9106);left:373.02px;">Corbisiero </span>
<span class="t" style="top:270px;line-height:18px;font-size:14px;color:#fff;font-weight:bold;text-shadow:1px 1px 0 #0a2a9a;transform:scaleX(0.9294);left:440.30px;">Vincenzo\</span>
<span class="t" style="top:270px;line-height:18px;font-size:14px;color:#fff;font-weight:bold;text-shadow:1px 1px 0 #0a2a9a;transform:scaleX(0.9090);left:500.82px;">Rimborsi </span>
<span class="t" style="top:270px;line-height:18px;font-size:14px;color:#fff;font-weight:bold;text-shadow:1px 1px 0 #0a2a9a;transform:scaleX(0.9369);left:559.50px;">spese\2013</span>
<span class="t" style="top:296px;line-height:15px;font-size:11px;color:#000;transform:scaleX(0.9675);left:9.77px;">File</span>
<span class="t" style="top:296px;line-height:15px;font-size:11px;color:#000;transform:scaleX(0.9831);left:41.96px;">Modifica</span>
<span class="t" style="top:296px;line-height:15px;font-size:11px;color:#000;transform:scaleX(0.9453);left:96.89px;">Visualizza</span>
<span class="t" style="top:296px;line-height:15px;font-size:11px;color:#000;transform:scaleX(1.0326);left:158.13px;">Preferiti</span>
<span class="t" style="top:296px;line-height:15px;font-size:11px;color:#000;transform:scaleX(1.0092);left:212.24px;">Strumenti</span>
<span class="t" style="top:296px;line-height:15px;font-size:11px;color:#000;left:273.95px;">?</span>
<span class="t" style="top:328px;line-height:15px;font-size:11px;color:#000;transform:scaleX(1.0479);left:37.21px;">Indietro</span>
<span class="t" style="top:328px;line-height:15px;font-size:11px;color:#000;transform:scaleX(0.9877);left:215.06px;">Cerca</span>
<span class="t" style="top:328px;line-height:15px;font-size:11px;color:#000;transform:scaleX(0.9916);left:282.26px;">Cartelle</span>
<span class="t" style="top:360px;line-height:15px;font-size:11px;color:#8c897b;transform:scaleX(0.9756);left:6.47px;">Indirizzo</span>
<span class="t" style="top:360px;line-height:15px;font-size:11px;color:#000;transform:scaleX(1.1236);left:72.96px;">C:\</span>
<span class="t" style="top:360px;line-height:15px;font-size:11px;color:#000;transform:scaleX(0.9849);left:88.86px;">Documenti\</span>
<span class="t" style="top:360px;line-height:15px;font-size:11px;color:#000;transform:scaleX(0.9536);left:143.68px;">Lavoro\</span>
<span class="t" style="top:360px;line-height:15px;font-size:11px;color:#000;transform:scaleX(0.9918);left:178.66px;">Gestionale\</span>
<span class="t" style="top:360px;line-height:15px;font-size:11px;color:#000;transform:scaleX(0.9342);left:233.90px;">Personale e </span>
<span class="t" style="top:360px;line-height:15px;font-size:11px;color:#000;transform:scaleX(1.0277);left:291.53px;">Dipendenti\</span>
<span class="t" style="top:360px;line-height:15px;font-size:11px;color:#000;transform:scaleX(0.9175);left:348.81px;">Corbisiero </span>
<span class="t" style="top:360px;line-height:15px;font-size:11px;color:#000;transform:scaleX(0.9894);left:397.56px;">Vincenzo\</span>
<span class="t" style="top:360px;line-height:15px;font-size:11px;color:#000;transform:scaleX(0.9106);left:445.22px;">Rimborsi </span>
<span class="t" style="top:360px;line-height:15px;font-size:11px;color:#000;transform:scaleX(0.9948);left:487.45px;">spese\2013</span>
<span class="t" style="top:360px;line-height:15px;font-size:11px;color:#000;left:764.15px;">Vai</span>
<span class="t" style="top:397px;line-height:15px;font-size:11px;color:#23489f;font-weight:bold;transform:scaleX(1.0801);left:26.09px;">Operazioni file e cartella</span>
<span class="t" style="top:425px;line-height:15px;font-size:11px;color:#2450b4;transform:scaleX(0.9905);left:49.26px;">Crea nuova cartella</span>
<span class="t" style="top:445px;line-height:15px;font-size:11px;color:#2450b4;transform:scaleX(0.9606);left:49.28px;">Pubblica cartella sul Web</span>
<span class="t" style="top:465px;line-height:15px;font-size:11px;color:#2450b4;transform:scaleX(0.9725);left:49.27px;">Condividi cartella</span>
<span class="t" style="top:381px;line-height:15px;font-size:11px;color:#000;transform:scaleX(0.9485);left:238.09px;">Nome</span>
<span class="t" style="top:381px;line-height:15px;font-size:11px;color:#000;transform:scaleX(0.9438);left:587.19px;">Dimensione</span>
<span class="t" style="top:381px;line-height:15px;font-size:11px;color:#000;transform:scaleX(0.9645);left:656.28px;">Tipo</span>
<span class="t" style="top:381px;line-height:15px;font-size:11px;color:#000;transform:scaleX(0.9679);left:776.07px;">Data ultima modifica</span>
<span class="t" style="top:400px;line-height:15px;font-size:11px;color:#000090;transform:scaleX(0.9680);left:248.07px;">201301-Rimborso spese Corbisiero.xls</span>
<span class="t" style="top:400px;line-height:15px;font-size:11px;color:#000090;transform:scaleX(0.9244);left:614.31px;">36 KB</span>
<span class="t" style="top:400px;line-height:15px;font-size:11px;color:#000090;transform:scaleX(1.0125);left:653.24px;">Microsoft Office Exc...</span>
<span class="t" style="top:400px;line-height:15px;font-size:11px;color:#000090;transform:scaleX(1.0209);left:773.13px;">04/07/2013 10.12</span>
<span class="t" style="top:417px;line-height:15px;font-size:11px;color:#000090;transform:scaleX(0.9680);left:248.07px;">201302-Rimborso spese Corbisiero.xls</span>
<span class="t" style="top:417px;line-height:15px;font-size:11px;color:#000090;transform:scaleX(0.9244);left:614.31px;">36 KB</span>
<span class="t" style="top:417px;line-height:15px;font-size:11px;color:#000090;transform:scaleX(1.0125);left:653.24px;">Microsoft Office Exc...</span>
<span class="t" style="top:417px;line-height:15px;font-size:11px;color:#000090;transform:scaleX(1.0209);left:773.13px;">05/07/2013 10.15</span>
<span class="t" style="top:434px;line-height:15px;font-size:11px;color:#000090;transform:scaleX(0.9680);left:248.07px;">201304-Rimborso spese Corbisiero.xls</span>
<span class="t" style="top:434px;line-height:15px;font-size:11px;color:#000090;transform:scaleX(0.9244);left:614.31px;">36 KB</span>
<span class="t" style="top:434px;line-height:15px;font-size:11px;color:#000090;transform:scaleX(1.0125);left:653.24px;">Microsoft Office Exc...</span>
<span class="t" style="top:434px;line-height:15px;font-size:11px;color:#000090;transform:scaleX(1.1006);left:773.07px;">02/08/2013 9.30</span>
<span class="t" style="top:451px;line-height:15px;font-size:11px;color:#000;transform:scaleX(0.9680);left:248.07px;">201310-Rimborso spese Corbisiero.xls</span>
<span class="t" style="top:451px;line-height:15px;font-size:11px;color:#000;transform:scaleX(0.9244);left:614.31px;">36 KB</span>
<span class="t" style="top:451px;line-height:15px;font-size:11px;color:#000;transform:scaleX(1.0125);left:653.24px;">Microsoft Office Exc...</span>
<span class="t" style="top:451px;line-height:15px;font-size:11px;color:#000;transform:scaleX(1.0409);left:773.12px;">06/11/2013 11.02</span>
<span class="t" style="top:468px;line-height:15px;font-size:11px;color:#000;transform:scaleX(0.9722);left:248.07px;">201311-Rimborso spese Corbisiero.xls</span>
<span class="t" style="top:468px;line-height:15px;font-size:11px;color:#000;transform:scaleX(0.9244);left:614.31px;">36 KB</span>
<span class="t" style="top:468px;line-height:15px;font-size:11px;color:#000;transform:scaleX(1.0125);left:653.24px;">Microsoft Office Exc...</span>
<span class="t" style="top:468px;line-height:15px;font-size:11px;color:#000;transform:scaleX(1.0209);left:773.13px;">05/12/2013 10.44</span>
</body></html>
